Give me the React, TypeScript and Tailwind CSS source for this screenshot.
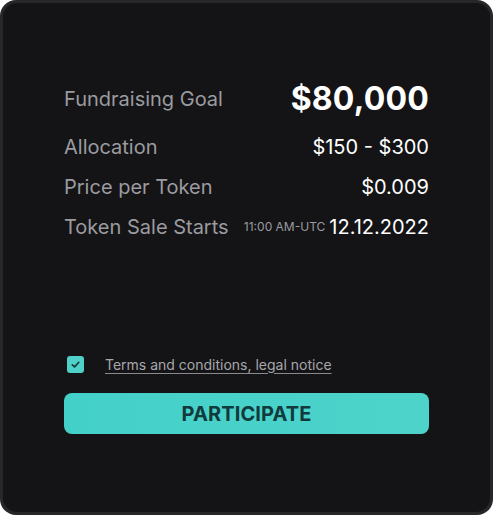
import React from "react";

export default function App() {
  const font = { fontFamily: "Inter, 'Noto Sans', sans-serif" };
  return (
    <div className="w-[493px] h-[515px] bg-white" style={font}>
      <div className="w-full h-full rounded-[16px] bg-[#27272a] p-[3px]">
        <div className="w-full h-full rounded-[14px] bg-[#141416] px-[61px] pt-[77px] flex flex-col">
          <div className="flex items-center justify-between h-[38px]">
            <span className="text-[20px] text-[#9b9ba0]">Fundraising Goal</span>
            <span className="text-[32px] font-bold text-white tracking-[0.2px]">$80,000</span>
          </div>
          <div className="flex items-center justify-between h-[24px] mt-[17px]">
            <span className="text-[20px] text-[#9b9ba0]">Allocation</span>
            <span className="text-[20px] font-normal text-white">$150 - $300</span>
          </div>
          <div className="flex items-center justify-between h-[24px] mt-[16px]">
            <span className="text-[20px] text-[#9b9ba0]">Price per Token</span>
            <span className="text-[20px] font-normal text-white">$0.009</span>
          </div>
          <div className="flex items-center justify-between h-[24px] mt-[16px]">
            <span className="text-[20px] text-[#9b9ba0]">Token Sale Starts</span>
            <span className="flex items-center gap-[4px]">
              <span className="text-[12px] text-[#9b9ba0]">11:00 AM-UTC</span>
              <span className="text-[20px] font-normal text-white">12.12.2022</span>
            </span>
          </div>
          <div className="flex items-center h-[20px] mt-[115px] ml-[3px] gap-[21px]">
            <span className="w-[17px] h-[17px] rounded-[3px] bg-[#4fd1c9] flex items-center justify-center">
              <svg width="11" height="11" viewBox="0 0 12 12" fill="none">
                <path d="M2.5 6.3 L5 8.6 L9.6 3.6" stroke="#123b3b" strokeWidth="1.8" strokeLinecap="round" strokeLinejoin="round" />
              </svg>
            </span>
            <span className="text-[14px] text-[#a7a7ab] underline underline-offset-[3px] decoration-[#8a8a8e]">
              Terms and conditions, legal notice
            </span>
          </div>
          <button className="mt-[19px] h-[41px] w-full rounded-[8px] bg-gradient-to-r from-[#43d0c9] to-[#4dd3ca] text-[20px] font-bold text-[#113a3c] tracking-[0.1px]">
            PARTICIPATE
          </button>
        </div>
      </div>
    </div>
  );
}
